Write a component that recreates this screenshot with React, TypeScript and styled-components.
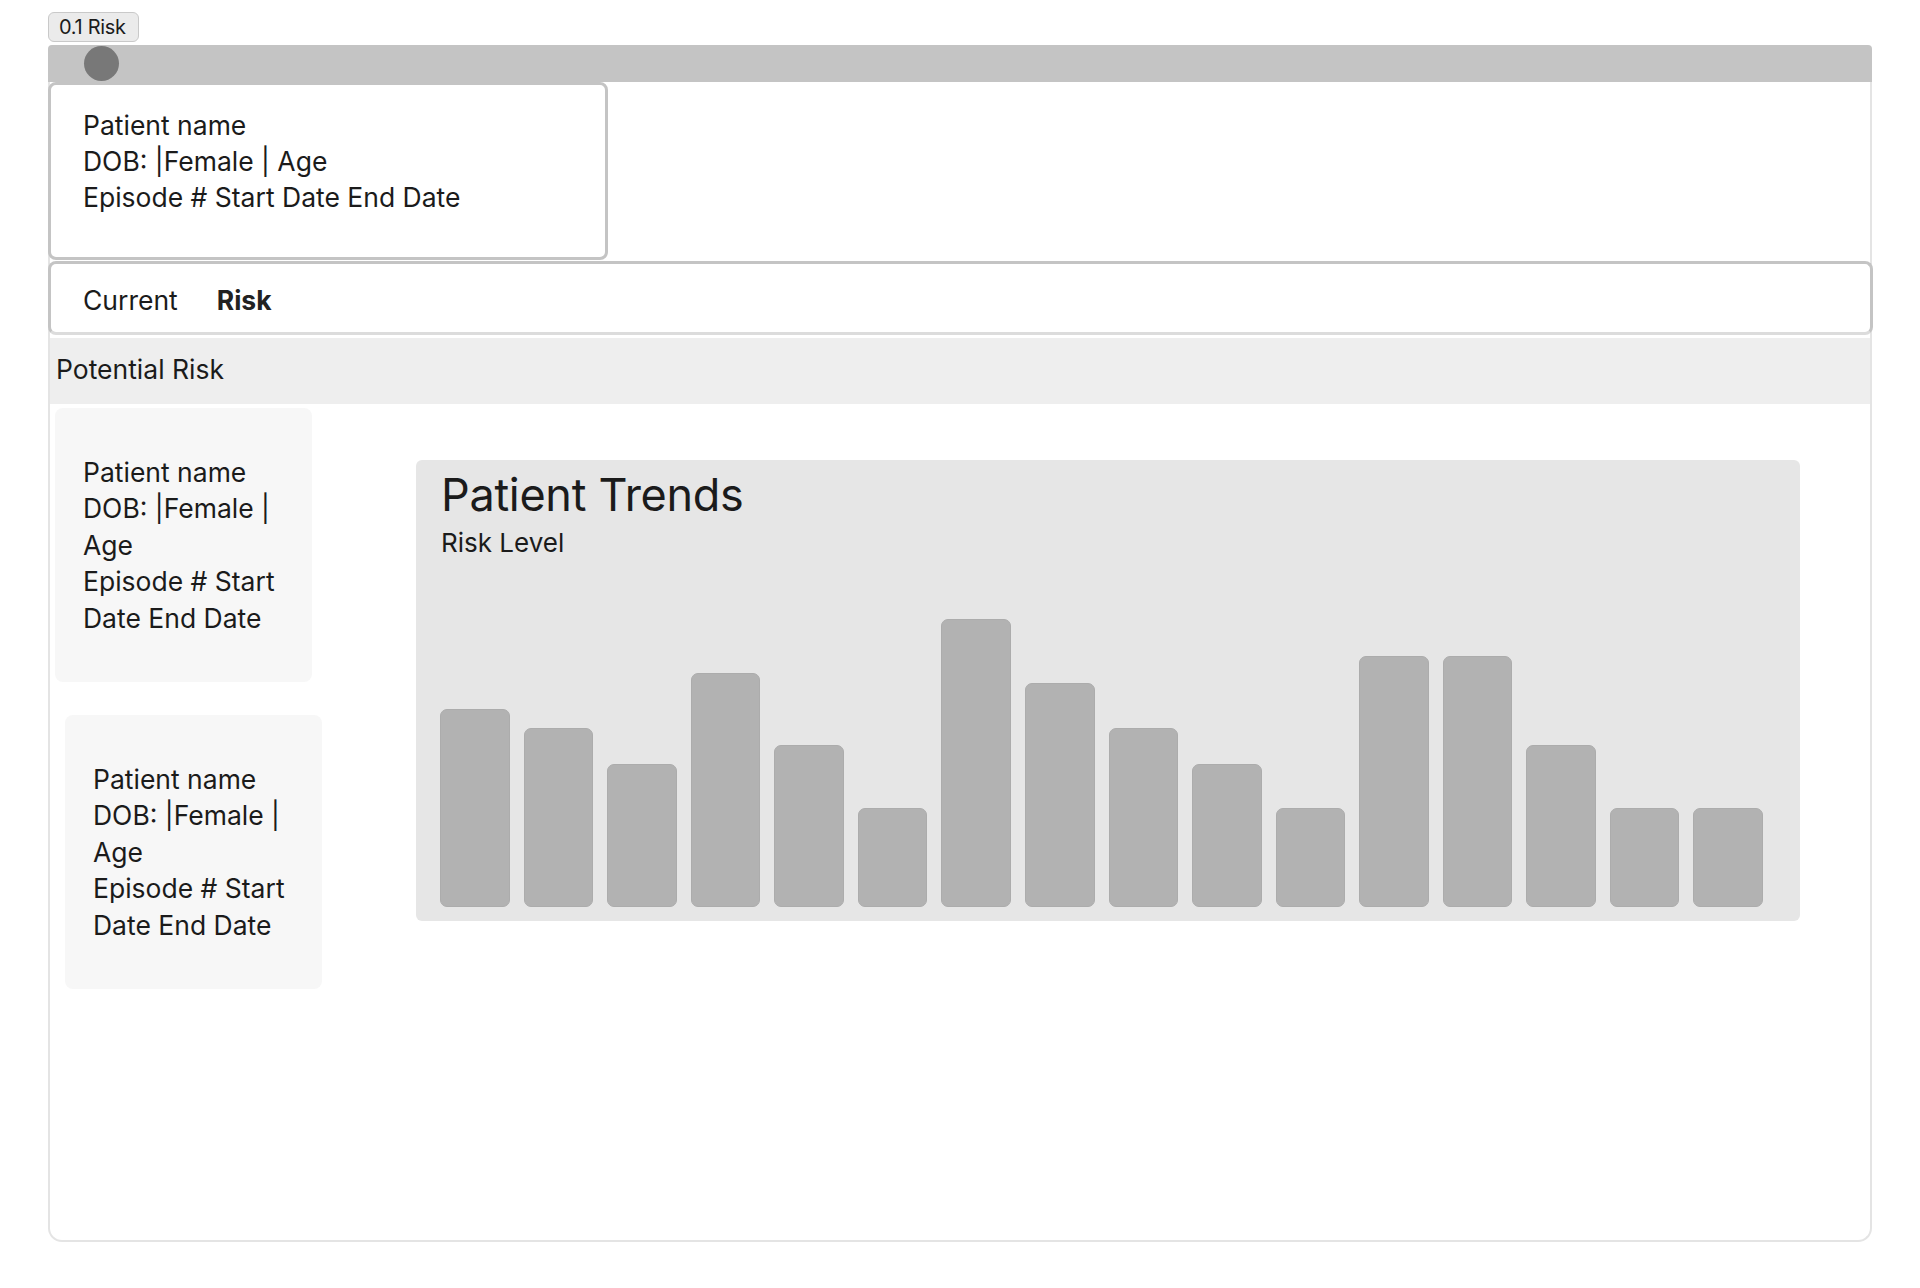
import styled, { createGlobalStyle } from "styled-components";

const GlobalStyle = createGlobalStyle`
  body {
    margin: 0;
    background: #ffffff;
    font-family: Inter, "Noto Sans", Arial, sans-serif;
    color: #1b1b1b;
  }
`;

const Page = styled.div`
  padding: 12px 48px 0 48px;
  display: flex;
  flex-direction: column;
  align-items: flex-start;
`;

const Badge = styled.div`
  height: 30px;
  padding: 0 12px 0 10px;
  display: flex;
  align-items: center;
  background: #ebebeb;
  border: 1px solid #c9c9c9;
  border-radius: 6px;
  box-sizing: border-box;
  font-size: 20px;
  letter-spacing: -0.3px;
  margin-bottom: 3px;
`;

const Frame = styled.div`
  width: 1824px;
  height: 1197px;
  box-sizing: border-box;
  border: 2px solid #e4e4e4;
  border-top: none;
  border-radius: 6px 6px 14px 14px;
  display: flex;
  flex-direction: column;
`;

const TopBar = styled.div`
  height: 37px;
  margin: 0 -2px;
  background: #c4c4c4;
  border-radius: 4px 4px 0 0;
  display: flex;
  align-items: center;
  padding-left: 36px;
`;

const Dot = styled.div`
  width: 35px;
  height: 35px;
  border-radius: 50%;
  background: #787878;
`;

const InfoCard = styled.div`
  width: 560px;
  height: 178px;
  margin-left: -2px;
  box-sizing: border-box;
  border: 3px solid #c4c4c4;
  border-radius: 8px;
  padding: 22px 32px;
  font-size: 26.5px;
  line-height: 36px;
`;

const TabBar = styled.div`
  height: 74px;
  margin: 1px -3px 0 -2px;
  box-sizing: border-box;
  border: 3px solid #c4c4c4;
  border-bottom-color: #dcdcdc;
  border-radius: 8px;
  display: flex;
  align-items: center;
  gap: 39px;
  padding: 4px 32px 0 32px;
  font-size: 26.5px;
`;

const Tab = styled.span<{ $active?: boolean }>`
  font-weight: ${(p) => (p.$active ? 700 : 400)};
  color: ${(p) => (p.$active ? "#222" : "#1b1b1b")};
`;

const SectionHead = styled.div`
  height: 66px;
  margin-top: 3px;
  background: #eeeeee;
  display: flex;
  align-items: center;
  padding: 0 0 4px 6px;
  box-sizing: border-box;
  font-size: 26.5px;
`;

const Body = styled.div`
  display: flex;
  align-items: flex-start;
  padding: 4px 0 0 5px;
`;

const CardColumn = styled.div`
  display: flex;
  flex-direction: column;
  gap: 33px;
  width: 266px;
`;

const PatientCard = styled.div<{ $shift?: number }>`
  width: 257px;
  height: 274px;
  box-sizing: border-box;
  margin-left: ${(p) => p.$shift ?? 0}px;
  background: #f7f7f7;
  border-radius: 8px;
  padding: 46px 28px 0 28px;
  font-size: 26.5px;
  line-height: 36.4px;
`;

const ChartPanel = styled.div`
  margin: 52px 0 0 95px;
  width: 1384px;
  box-sizing: border-box;
  background: #e6e6e6;
  border-radius: 6px;
  padding: 7px 37px 14px 24px;
  display: flex;
  flex-direction: column;
`;

const ChartTitle = styled.h2`
  margin: 0;
  padding-left: 1px;
  font-size: 45px;
  line-height: 56px;
  font-weight: 400;
  letter-spacing: -0.3px;
`;

const ChartSubtitle = styled.div`
  padding-left: 1px;
  font-size: 26px;
  line-height: 36px;
  margin-top: 2px;
`;

const Bars = styled.div`
  height: 346px;
  display: flex;
  align-items: flex-end;
  gap: 14px;
`;

const Bar = styled.div`
  width: 70px;
  box-sizing: border-box;
  background: #b2b2b2;
  border: 1px solid #acacac;
  border-radius: 7px;
`;

const patient = {
  name: "Patient name",
  line: "DOB: |Female | Age",
  episode: "Episode # Start Date End Date",
};

const levels = [198, 179, 143, 234, 162, 99, 288, 224, 179, 143, 99, 251, 251, 162, 99, 99];

const PatientText = () => (
  <>
    <div>{patient.name}</div>
    <div>{patient.line}</div>
    <div>{patient.episode}</div>
  </>
);

export default function App() {
  return (
    <>
      <GlobalStyle />
      <Page>
        <Badge>0.1 Risk</Badge>
        <Frame>
          <TopBar>
            <Dot />
          </TopBar>
          <InfoCard>
            <PatientText />
          </InfoCard>
          <TabBar>
            <Tab>Current</Tab>
            <Tab $active>Risk</Tab>
          </TabBar>
          <SectionHead>Potential Risk</SectionHead>
          <Body>
            <CardColumn>
              <PatientCard>
                <PatientText />
              </PatientCard>
              <PatientCard $shift={10}>
                <PatientText />
              </PatientCard>
            </CardColumn>
            <ChartPanel>
              <ChartTitle>Patient Trends</ChartTitle>
              <ChartSubtitle>Risk Level</ChartSubtitle>
              <Bars>
                {levels.map((h, i) => (
                  <Bar key={i} style={{ height: h }} />
                ))}
              </Bars>
            </ChartPanel>
          </Body>
        </Frame>
      </Page>
    </>
  );
}
